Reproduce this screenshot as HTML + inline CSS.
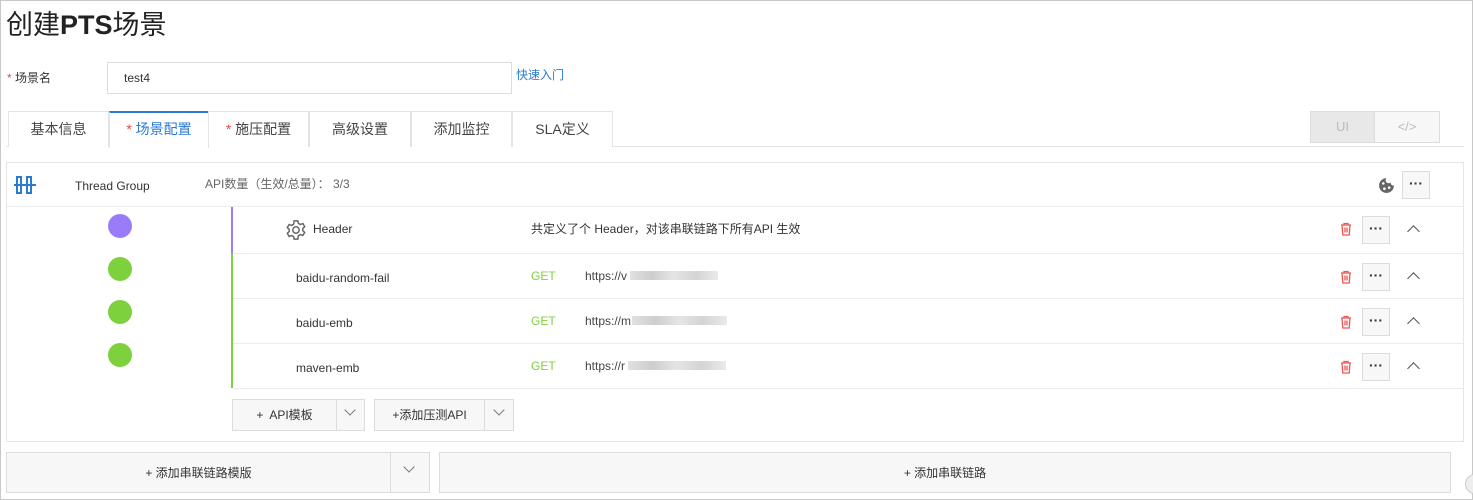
<!DOCTYPE html>
<html><head><meta charset="utf-8"><style>
*{box-sizing:border-box;margin:0;padding:0}
body{width:1473px;height:500px;background:#fff;font-family:"Liberation Sans","Noto Sans CJK SC",sans-serif;color:#333;font-size:12px;position:relative;overflow:hidden}
.a{position:absolute}
.t{line-height:1;white-space:nowrap}
.tab{position:absolute;top:111px;height:36px;border:1px solid #e3e3e3;border-bottom:none;background:#fff;font-size:14px;text-align:center;line-height:35px;color:#444}
.btn{position:absolute;border:1px solid #dcdcdc;background:#f7f7f7}
.dots{position:absolute;width:28px;height:28px;border:1px solid #dcdcdc;background:#f7f7f7;text-align:center;font-size:14px;line-height:22px;color:#333;font-weight:bold}
.hr{position:absolute;height:1px;background:#ececec}
.circ{position:absolute;width:24px;height:24px;border-radius:50%;left:108px}
.blur{position:absolute;height:9px;background:linear-gradient(90deg,#ddd,#c8c8c8,#e2e2e2,#cfcfcf,#e8e8e8);opacity:.9}
.chev{position:absolute;width:9px;height:9px;border-left:1.5px solid #555;border-top:1.5px solid #555;transform:rotate(45deg)}
.dchev{position:absolute;width:8px;height:8px;border-right:1.2px solid #777;border-bottom:1.2px solid #777;transform:rotate(45deg)}
</style></head><body>
<div class="a" style="left:0;top:0;width:1473px;height:500px;border:1px solid #c8c8c8"></div>
<div class="a t" style="left:6px;top:12px;font-size:27px;color:#222">创建<b>PTS</b>场景</div>
<div class="a t" style="left:7px;top:72px;font-size:12px"><span style="color:#e44">*</span> 场景名</div>
<div class="a" style="left:107px;top:62px;width:405px;height:32px;border:1px solid #ddd"></div>
<div class="a t" style="left:124px;top:72px;font-size:12px">test4</div>
<div class="a t" style="left:516px;top:69px;font-size:12px;color:#2a7ad2">快速入门</div>

<div class="hr" style="left:6px;top:146px;width:1458px;background:#e3e3e3"></div>
<div class="tab" style="left:8px;width:101px">基本信息</div>
<div class="tab" style="left:109px;width:100px;border-top:2px solid #2a7ad2;color:#2a7ad2;height:37px;line-height:33px"><span style="color:#e44">*</span> 场景配置</div>
<div class="tab" style="left:208px;width:101px"><span style="color:#e44">*</span> 施压配置</div>
<div class="tab" style="left:309px;width:102px">高级设置</div>
<div class="tab" style="left:411px;width:101px">添加监控</div>
<div class="tab" style="left:512px;width:101px">SLA定义</div>
<div class="a" style="left:1310px;top:111px;width:65px;height:32px;background:#e8e8e8;border:1px solid #ddd;text-align:center;line-height:30px;color:#bbb;font-size:13px">UI</div>
<div class="a" style="left:1374px;top:111px;width:66px;height:32px;background:#f7f7f7;border:1px solid #ddd;text-align:center;line-height:30px;color:#bbb;font-size:13px">&lt;/&gt;</div>

<div class="a" style="left:6px;top:162px;width:1458px;height:280px;border:1px solid #e6e6e6"></div>
<svg class="a" style="left:14px;top:176px" width="22" height="18" viewBox="0 0 22 18"><g stroke="#2a7ad2" stroke-width="2" fill="none"><rect x="3" y="1" width="4" height="16"/><rect x="13" y="1" width="4" height="16"/><line x1="0" y1="9" x2="22" y2="9"/></g></svg>
<div class="a t" style="left:75px;top:180px;font-size:12px">Thread Group</div>
<div class="a t" style="left:205px;top:178px;font-size:12px;color:#666">API数量（生效/总量）： 3/3</div>
<svg class="a" style="left:1378px;top:177px" width="17" height="17" viewBox="0 0 16 16"><path d="M8 1a7 7 0 1 0 7 7 2.5 2.5 0 0 1-3-3 2.5 2.5 0 0 1-4-4z" fill="#666"/><circle cx="5" cy="6" r="1.2" fill="#fff"/><circle cx="6" cy="11" r="1.2" fill="#fff"/><circle cx="10.5" cy="10" r="1.2" fill="#fff"/></svg>
<div class="dots" style="left:1402px;top:171px">···</div>
<div class="hr" style="left:7px;top:206px;width:1456px"></div>

<div class="circ" style="top:214px;background:#9b7cf8"></div>
<div class="circ" style="top:257px;background:#7dd13c"></div>
<div class="circ" style="top:300px;background:#7dd13c"></div>
<div class="circ" style="top:343px;background:#7dd13c"></div>

<div class="a" style="left:231px;top:207px;width:2px;height:46px;background:#9b7cf8"></div>
<div class="a" style="left:231px;top:253px;width:2px;height:135px;background:#7dd13c"></div>
<div class="hr" style="left:233px;top:253px;width:1230px"></div>
<div class="hr" style="left:233px;top:298px;width:1230px"></div>
<div class="hr" style="left:233px;top:343px;width:1230px"></div>
<div class="hr" style="left:233px;top:388px;width:1230px"></div>

<svg class="a" style="left:285px;top:219px" width="22" height="22" viewBox="0 0 24 24"><g fill="none" stroke="#666" stroke-width="1.6"><circle cx="12" cy="12" r="3.5"/><path d="M10 2h4l.6 2.8 2.2 1.2 2.7-1 2 3.4-2.1 1.9v2.4l2.1 1.9-2 3.4-2.7-1-2.2 1.2L14 22h-4l-.6-2.8-2.2-1.2-2.7 1-2-3.4 2.1-1.9v-2.4L2.5 9.4l2-3.4 2.7 1 2.2-1.2z"/></g></svg>
<div class="a t" style="left:313px;top:223px;font-size:12px">Header</div>
<div class="a t" style="left:531px;top:223px;font-size:12px">共定义了个 Header，对该串联链路下所有API 生效</div>

<div class="a t" style="left:296px;top:272px">baidu-random-fail</div>
<div class="a t" style="left:296px;top:317px">baidu-emb</div>
<div class="a t" style="left:296px;top:362px">maven-emb</div>
<div class="a t" style="left:531px;top:270px;color:#7dd13c">GET</div>
<div class="a t" style="left:531px;top:315px;color:#7dd13c">GET</div>
<div class="a t" style="left:531px;top:360px;color:#7dd13c">GET</div>
<div class="a t" style="left:585px;top:270px;color:#444">https://v</div>
<div class="a t" style="left:585px;top:315px;color:#444">https://m</div>
<div class="a t" style="left:585px;top:360px;color:#444">https://r</div>
<div class="blur" style="left:630px;top:271px;width:88px"></div>
<div class="blur" style="left:632px;top:316px;width:95px"></div>
<div class="blur" style="left:628px;top:361px;width:98px"></div>

<svg class="a" style="left:1340px;top:222px" width="12" height="14" viewBox="0 0 12 14"><g fill="none" stroke="#e55" stroke-width="1.3"><path d="M1 3h10M4 3V1.5h4V3M2 3l.8 10h6.4L10 3M5 5.5v5M7 5.5v5"/></g></svg>
<svg class="a" style="left:1340px;top:270px" width="12" height="14" viewBox="0 0 12 14"><g fill="none" stroke="#e55" stroke-width="1.3"><path d="M1 3h10M4 3V1.5h4V3M2 3l.8 10h6.4L10 3M5 5.5v5M7 5.5v5"/></g></svg>
<svg class="a" style="left:1340px;top:315px" width="12" height="14" viewBox="0 0 12 14"><g fill="none" stroke="#e55" stroke-width="1.3"><path d="M1 3h10M4 3V1.5h4V3M2 3l.8 10h6.4L10 3M5 5.5v5M7 5.5v5"/></g></svg>
<svg class="a" style="left:1340px;top:360px" width="12" height="14" viewBox="0 0 12 14"><g fill="none" stroke="#e55" stroke-width="1.3"><path d="M1 3h10M4 3V1.5h4V3M2 3l.8 10h6.4L10 3M5 5.5v5M7 5.5v5"/></g></svg>
<div class="dots" style="left:1362px;top:216px">···</div>
<div class="dots" style="left:1362px;top:263px">···</div>
<div class="dots" style="left:1362px;top:308px">···</div>
<div class="dots" style="left:1362px;top:353px">···</div>
<div class="chev" style="left:1409px;top:227px"></div>
<div class="chev" style="left:1409px;top:274px"></div>
<div class="chev" style="left:1409px;top:319px"></div>
<div class="chev" style="left:1409px;top:364px"></div>

<div class="btn" style="left:232px;top:399px;width:105px;height:32px;text-align:center;line-height:30px">+&nbsp; API模板</div>
<div class="btn" style="left:336px;top:399px;width:29px;height:32px"></div>
<div class="dchev" style="left:346px;top:406px"></div>
<div class="btn" style="left:374px;top:399px;width:111px;height:32px;text-align:center;line-height:30px">+添加压测API</div>
<div class="btn" style="left:484px;top:399px;width:30px;height:32px"></div>
<div class="dchev" style="left:495px;top:406px"></div>

<div class="btn" style="left:6px;top:452px;width:385px;height:41px;text-align:center;line-height:40px">+ 添加串联链路模版</div>
<div class="btn" style="left:390px;top:452px;width:40px;height:41px"></div>
<div class="dchev" style="left:405px;top:463px"></div>
<div class="btn" style="left:439px;top:452px;width:1012px;height:41px;text-align:center;line-height:40px">+ 添加串联链路</div>
<div class="a" style="left:1465px;top:474px;width:12px;height:20px;border-radius:10px 0 0 10px;background:#eee;border:1px solid #ccc"></div>
</body></html>
